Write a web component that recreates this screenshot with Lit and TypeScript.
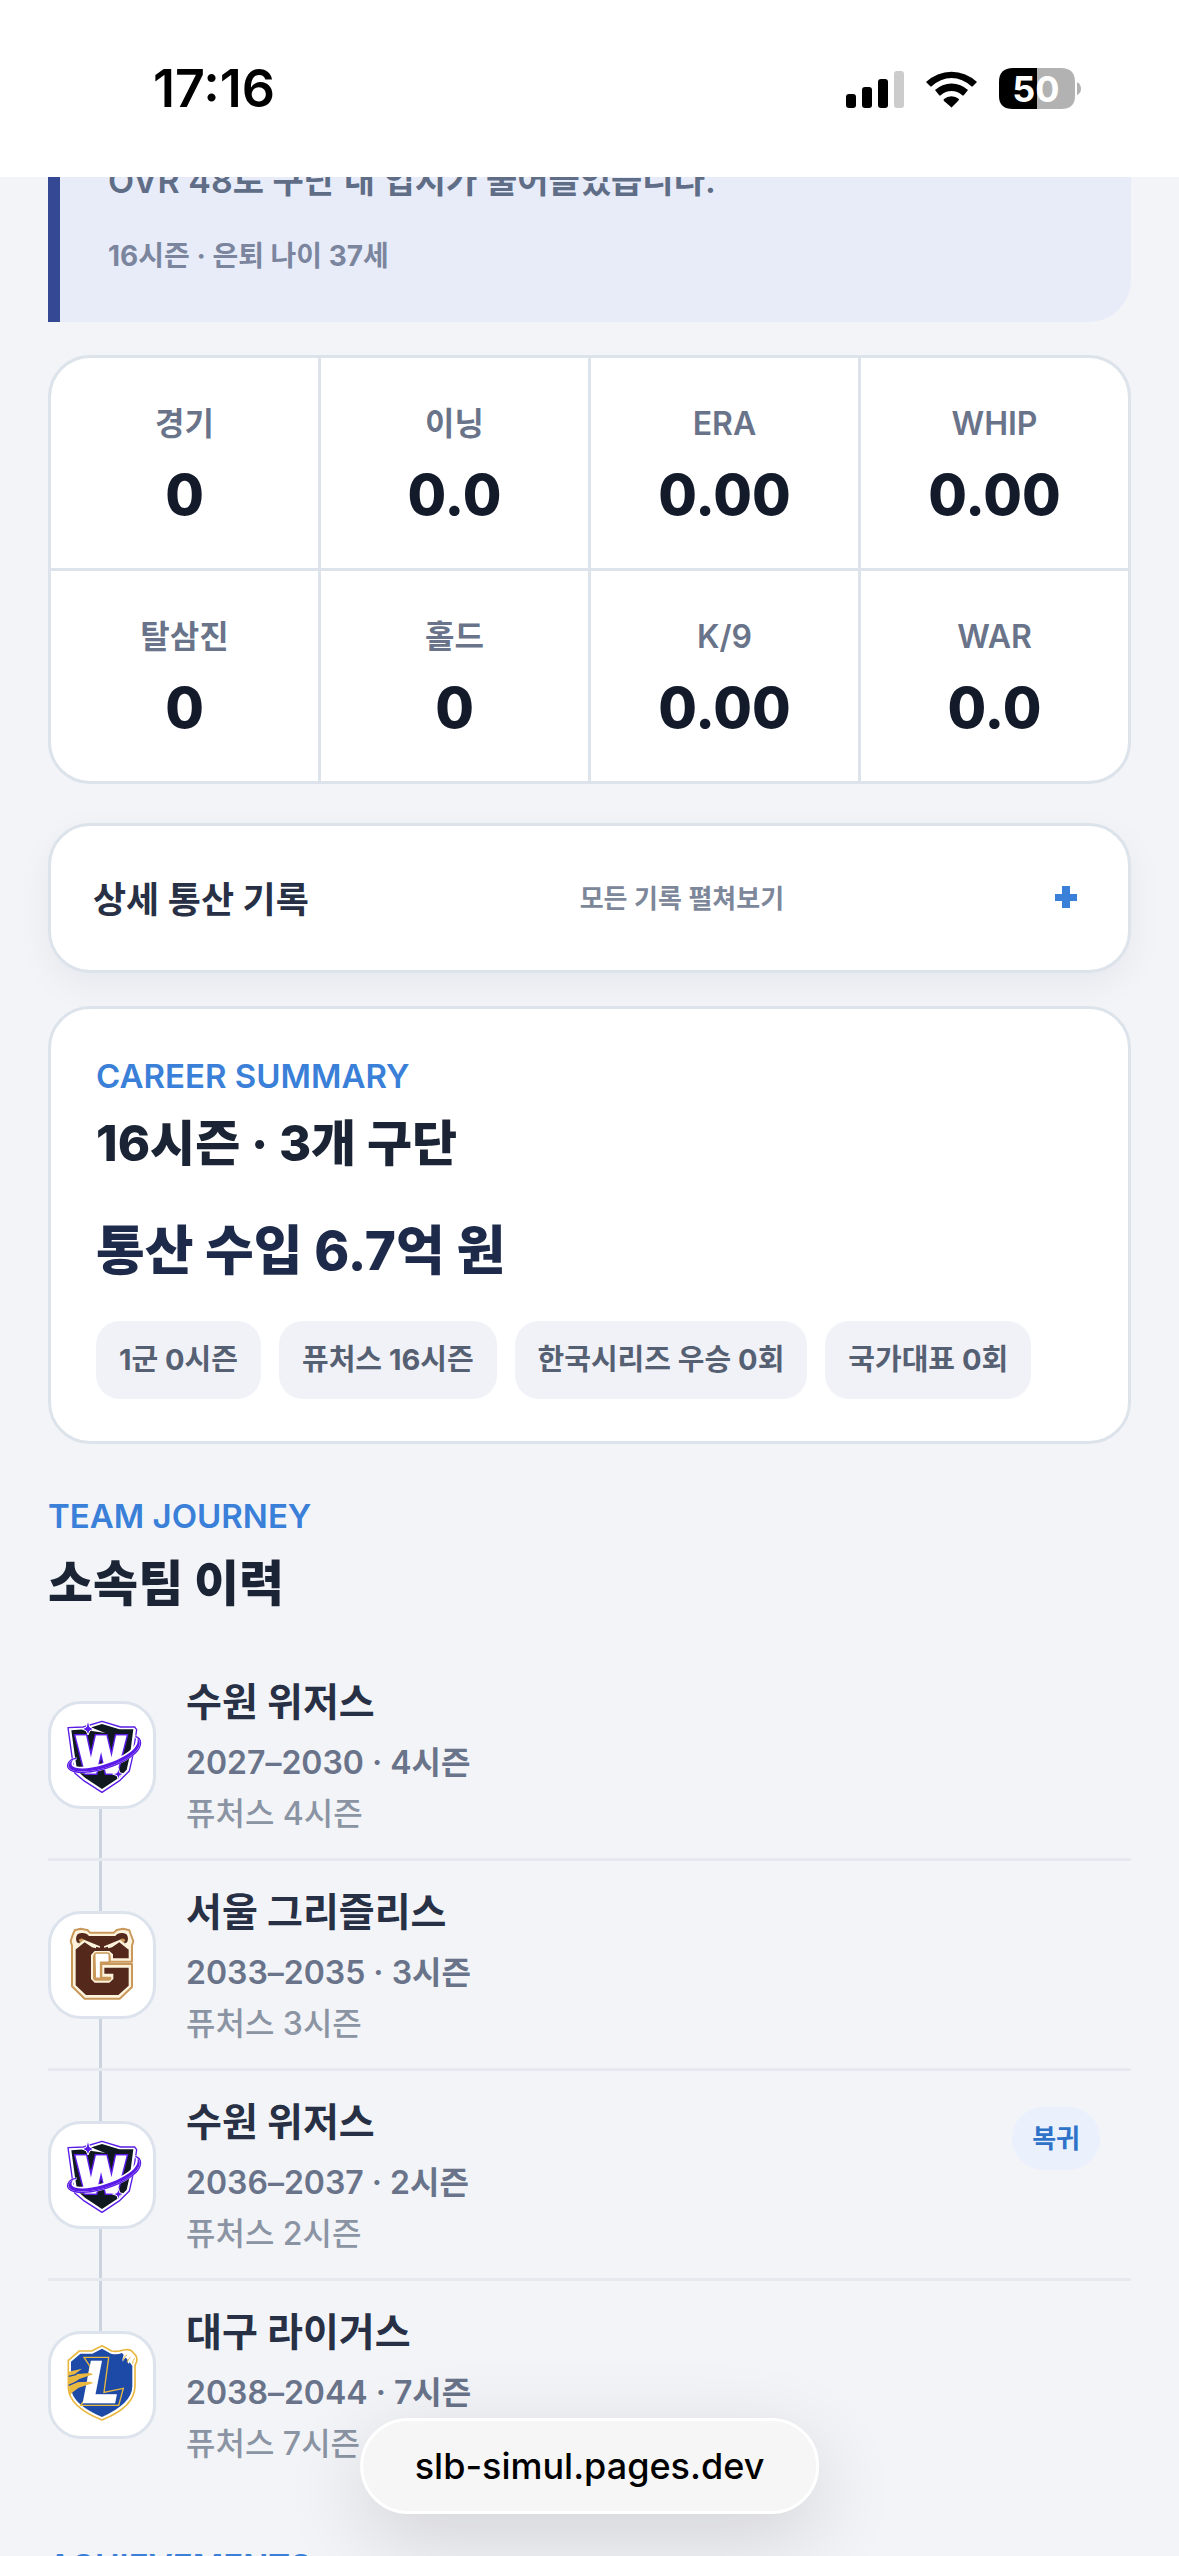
import { LitElement, html, css, svg, nothing } from "lit";
import { customElement, property } from "lit/decorators.js";

type Team = "wizards" | "grizzlies" | "ligers";

interface Stat {
  label: string;
  value: string;
}

interface Stint {
  team: Team;
  name: string;
  years: string;
  level: string;
  badge?: string;
}

const STATS: Stat[] = [
  { label: "경기", value: "0" },
  { label: "이닝", value: "0.0" },
  { label: "ERA", value: "0.00" },
  { label: "WHIP", value: "0.00" },
  { label: "탈삼진", value: "0" },
  { label: "홀드", value: "0" },
  { label: "K/9", value: "0.00" },
  { label: "WAR", value: "0.0" },
];

const CHIPS = ["1군 0시즌", "퓨처스 16시즌", "한국시리즈 우승 0회", "국가대표 0회"];

const STINTS: Stint[] = [
  { team: "wizards", name: "수원 위저스", years: "2027–2030 · 4시즌", level: "퓨처스 4시즌" },
  { team: "grizzlies", name: "서울 그리즐리스", years: "2033–2035 · 3시즌", level: "퓨처스 3시즌" },
  { team: "wizards", name: "수원 위저스", years: "2036–2037 · 2시즌", level: "퓨처스 2시즌", badge: "복귀" },
  { team: "ligers", name: "대구 라이거스", years: "2038–2044 · 7시즌", level: "퓨처스 7시즌" },
];

const wizards = svg`
  <path d="M84 114 L130 112 L186 95 L242 112 L284 112 L290 120 L278 200 L268 244 L240 272 L186 308 L130 272 L104 250 L98 215 Z" fill="#fff" stroke="#5a1be8" stroke-width="4" stroke-linejoin="round"/>
  <path d="M94 122 L135 119 L186 103 L238 119 L280 119 L270 196 L260 240 L236 265 L186 298 L136 265 L112 244 L106 210 Z" fill="#101820"/>
  <path d="M150 112 L196 130 L156 124 Z" fill="#fff"/>
  <text x="183" y="248" text-anchor="middle" class="letter" font-size="150" fill="#fff" stroke="#5a1be8" stroke-width="18">W</text>
  <text x="183" y="248" text-anchor="middle" class="letter" font-size="150" fill="#fff" stroke="#fff" stroke-width="9">W</text>
  <path d="M286 140 C306 146 308 168 286 190 C256 218 190 246 130 248 C96 249 78 238 84 222 C88 212 98 207 110 206 C94 216 92 228 108 232 C150 240 228 216 266 188 C290 170 296 152 286 140 Z" fill="#5a1be8" stroke="#fff" stroke-width="5"/>
  <path d="M286 140 C306 146 308 168 286 190 C256 218 190 246 130 248 C96 249 78 238 84 222 C88 212 98 207 110 206" fill="none" stroke="#5a1be8" stroke-width="4"/>
  <path d="M144 90 L149 112 L161 118 L149 124 L144 136 L139 124 L127 118 L139 112 Z" fill="#5a1be8" stroke="#fff" stroke-width="3"/>
  <path d="M235 236 L239 249 L252 253 L239 258 L235 271 L231 258 L218 253 L231 249 Z" fill="#5a1be8" stroke="#fff" stroke-width="3"/>
`;

const grizzlies = svg`
  <path d="M104 92 L122 87 L142 91 L150 99 L222 99 L230 91 L250 87 L268 92 L273 106 L280 124 L276 138 L276 186 L209 186 L209 172 Q209 165 202 165 L168 165 Q162 165 162 171 L162 234 Q162 240 168 240 L206 240 Q211 240 211 234 L184 234 L184 193 L276 193 L276 262 L239 297 L134 297 L96 260 L96 138 L92 124 L98 106 Z" fill="#fdf3dc" stroke="#c9985a" stroke-width="6" stroke-linejoin="round"/>
  <path d="M108 118 Q108 100 124 100 Q140 99 147 109 L226 109 Q232 99 248 100 Q264 100 264 118 Q262 134 252 128 L266 145 L266 176 L219 176 L219 164 L208 154 L164 154 L153 166 L153 238 L164 249 L208 249 L220 238 L220 222 L193 222 L193 204 L266 204 L266 258 L235 286 L138 286 L107 257 L107 145 L120 128 Q110 134 108 118 Z" fill="#54281a"/>
  <path d="M116 122 Q118 116 128 117 L134 121 L122 130 Z M256 122 Q254 116 244 117 L238 121 L250 130 Z" fill="#c9985a"/>
  <path d="M104 142 L132 120 L180 140 L180 144 L168 141 L168 146 L156 143 L134 128 L106 150 Z M268 142 L240 120 L192 140 L192 144 L204 141 L204 146 L216 143 L238 128 L266 150 Z" fill="#fdf3dc"/>
  <path d="M164 166 Q164 160 170 160 L202 160 Q208 160 208 166 L208 188 L182 188 L182 236 L166 236 Z" fill="#fff" stroke="#c9985a" stroke-width="5"/>
`;

const ligers = svg`
  <path d="M85 122 L118 94 L155 94 L186 78 L215 94 Q234 97 250 91 Q274 86 280 100 Q294 110 290 126 Q286 132 285 140 L285 200 Q284 262 186 301 Q88 262 85 205 Z" fill="#fff" stroke="#e9b840" stroke-width="5" stroke-linejoin="round"/>
  <path d="M93 126 L121 102 L157 102 L186 87 L213 102 Q230 106 246 100 L256 112 L277 138 L277 200 Q276 252 186 292 Q96 254 93 205 Z" fill="#1d4aa6"/>
  <path d="M248 126 Q246 108 258 98 L276 100 L286 112 L284 132 L276 134 Q276 122 270 114 Q272 128 264 132 Q262 120 266 108 Q254 112 248 126 Z" fill="#fff"/>
  <path d="M249 122 Q252 108 261 106 M262 128 Q264 116 272 112 M278 132 Q278 122 284 116" fill="none" stroke="#e9b840" stroke-width="3"/>
  <path d="M132 113 L206 113 L192 218 L250 206 L236 257 L122 257 L136 238 L150 140 Z" fill="#1d4aa6" stroke="#e9b840" stroke-width="4"/>
  <text x="183" y="247" text-anchor="middle" class="letter" font-style="italic" font-size="174" fill="#fff" stroke="#fff" stroke-width="8">L</text>
  <path d="M86 156 L126 147 L104 164 L150 160 L160 164 L118 178 L104 188 L150 186 L160 190 L116 204 L98 218 L88 228 Z" fill="#e9b840"/>
  <path d="M86 170 L110 164 M86 197 L112 186" stroke="#1d4aa6" stroke-width="4"/>
`;

const LOGOS = { wizards, grizzlies, ligers };

@customElement("status-bar")
class StatusBar extends LitElement {
  static styles = css`
    :host {
      display: flex;
      justify-content: space-between;
      align-items: center;
      height: 177px;
      padding: 0 96px 0 153px;
      box-sizing: border-box;
      background: #fff;
      color: #000;
      flex: none;
    }
    .time {
      font-size: 52px;
      font-weight: 600;
      line-height: 60px;
    }
    .icons {
      display: flex;
      align-items: center;
      gap: 22px;
    }
    .icons svg {
      display: block;
    }
    .percent {
      font: 700 36px Inter, sans-serif;
    }
  `;

  render() {
    return html`
      <span class="time">17:16</span>
      <div class="icons">
        <svg width="58" height="42" viewBox="0 0 58 42" aria-hidden="true">
          <rect x="0" y="26" width="10" height="14" rx="3" />
          <rect x="16" y="19" width="10" height="21" rx="3" />
          <rect x="32" y="11" width="10" height="29" rx="3" />
          <rect x="48" y="3" width="10" height="37" rx="3" fill="#ccc" />
        </svg>
        <svg width="51" height="42" viewBox="0 0 51 42" aria-hidden="true">
          <path d="M0 14 A37 37 0 0 1 51 14 L47 18 Q46 19 45 18 A28 28 0 0 0 6 18 Q5 19 4 18 Z" />
          <path d="M9 22 A24 24 0 0 1 42 22 L38 27 Q37 28 36 27 A16 16 0 0 0 15 27 Q14 28 13 27 Z" />
          <path d="M18 31 A12 12 0 0 1 33 31 Q33 32 32 33 L26 39 Q25 40 25 39 L18 33 Q17 32 18 31 Z" />
        </svg>
        <svg width="84" height="42" viewBox="0 0 84 42" role="img" aria-label="50%">
          <path d="M38 0 H62 Q76 0 76 14 V28 Q76 41 62 41 H38 Z" fill="#b2b2b2" />
          <path d="M38 0 H14 Q0 0 0 14 V28 Q0 41 14 41 H38 Z" />
          <path d="M78 14 Q82 16 82 21 Q82 25 78 27 Z" fill="#b2b2b2" />
          <text class="percent" x="37" y="34" text-anchor="middle" fill="#fff">50</text>
        </svg>
      </div>
    `;
  }
}

@customElement("stint-row")
class StintRow extends LitElement {
  @property({ attribute: false }) stint!: Stint;
  @property({ type: Boolean }) first = false;
  @property({ type: Boolean }) last = false;

  static styles = css`
    .row {
      display: flex;
      align-items: flex-start;
      gap: 30px;
      height: 207px;
    }
    .track {
      display: flex;
      flex-direction: column;
      align-items: center;
      align-self: stretch;
      flex: none;
    }
    .line {
      flex: 1;
      width: 3px;
      margin-right: 3px;
      background: #cbd3df;
    }
    .hidden {
      background: none;
    }
    .crest {
      display: block;
      border: 3px solid #dde3ec;
      border-radius: 33px;
      background: #fff;
    }
    .letter {
      font-family: "Liberation Sans", sans-serif;
      font-weight: 700;
      paint-order: stroke;
    }
    .info {
      flex: 1;
      padding-top: 24px;
    }
    h3,
    p {
      margin: 0;
    }
    h3 {
      font-size: 39px;
      font-weight: 700;
      line-height: 54px;
      color: #273044;
    }
    .years {
      margin-top: 8px;
      font-size: 32px;
      font-weight: 600;
      line-height: 51px;
      color: #697389;
    }
    .level {
      font-size: 32px;
      font-weight: 500;
      line-height: 51px;
      color: #8b94a3;
    }
    .badge {
      margin: 36px 31px 0 0;
      padding: 0 20px;
      border-radius: 32px;
      background: #eaf1fd;
      color: #2f73c9;
      font-size: 26px;
      font-weight: 700;
      line-height: 63px;
    }
  `;

  render() {
    const s = this.stint;
    return html`
      <div class="row">
        <div class="track">
          <span class="line ${this.first ? "hidden" : ""}"></span>
          <svg class="crest" width="102" height="102" viewBox="33 43 306 306" role="img" aria-label=${s.name}>
            ${LOGOS[s.team]}
          </svg>
          <span class="line ${this.last ? "hidden" : ""}"></span>
        </div>
        <div class="info">
          <h3>${s.name}</h3>
          <p class="years">${s.years}</p>
          <p class="level">${s.level}</p>
        </div>
        ${s.badge ? html`<span class="badge">${s.badge}</span>` : nothing}
      </div>
    `;
  }
}

@customElement("app-root")
class AppRoot extends LitElement {
  static styles = css`
    :host {
      display: flex;
      flex-direction: column;
      height: 100vh;
      overflow: hidden;
      background: #f3f4f8;
      font-family: Inter, "Noto Sans CJK KR", sans-serif;
    }
    main {
      flex: 1;
      min-height: 0;
      overflow: hidden;
      padding: 0 48px;
    }
    h2,
    p,
    dl,
    dd,
    ul {
      margin: 0;
      padding: 0;
    }
    ul {
      list-style: none;
    }
    .notice {
      margin-top: -60px;
      padding: 37px 48px 39px;
      border-left: 12px solid #354893;
      border-radius: 0 42px 42px 0;
      background: #e8ecf9;
      color: #5f6d87;
      font-size: 34px;
      font-weight: 600;
      line-height: 54px;
    }
    .notice small {
      display: block;
      margin-top: 21px;
      font-size: 28px;
      font-weight: 700;
      color: #7b869e;
    }
    .card {
      border: 3px solid #dde3ea;
      border-radius: 42px;
      background: #fff;
    }
    .stats {
      display: grid;
      grid-template-columns: repeat(4, 1fr);
      gap: 3px;
      margin-top: 33px;
      overflow: hidden;
      background: #dde3ea;
    }
    .stat {
      height: 210px;
      box-sizing: border-box;
      padding-top: 42px;
      background: #fff;
      text-align: center;
    }
    dt {
      font-size: 32px;
      font-weight: 600;
      line-height: 48px;
      color: #697389;
    }
    dd {
      margin-top: 12px;
      font-size: 56px;
      font-weight: 800;
      line-height: 70px;
      color: #131a2a;
    }
    .details {
      display: flex;
      justify-content: space-between;
      align-items: center;
      width: 100%;
      height: 150px;
      margin-top: 39px;
      padding: 0 51px 3px 42px;
      font-family: inherit;
      text-align: left;
      box-shadow: 0 12px 36px rgba(20, 26, 42, 0.05);
    }
    .details strong {
      font-size: 36px;
      font-weight: 700;
      color: #273044;
    }
    .details span {
      font-size: 26px;
      font-weight: 600;
      color: #7d879a;
    }
    .details svg {
      display: block;
      fill: #3a7fd8;
    }
    .summary {
      position: relative;
      margin-top: 33px;
      padding: 43px 45px 42px;
    }
    .eyebrow {
      font-size: 33px;
      font-weight: 600;
      line-height: 48px;
      color: #3a7fd8;
    }
    h2 {
      margin-top: 6px;
      font-size: 49px;
      font-weight: 800;
      line-height: 76px;
      color: #1a2435;
    }
    .income {
      margin-top: 25px;
      font-size: 53px;
      font-weight: 800;
      line-height: 88px;
      color: #1d2a4a;
    }
    .chips {
      display: flex;
      flex-wrap: wrap;
      gap: 18px;
      margin-top: 26px;
    }
    .chips li {
      padding: 0 23px;
      border-radius: 24px;
      background: #f1f2f7;
      color: #566073;
      font-size: 29px;
      font-weight: 700;
      line-height: 78px;
    }
    .heading {
      margin-top: 48px;
    }
    .stints {
      margin-top: 29px;
    }
    .stints li + li {
      border-top: 3px solid #e7e9f1;
    }
    .next {
      margin-top: 54px;
    }
    .address {
      position: absolute;
      left: 50%;
      bottom: 42px;
      transform: translateX(-50%);
      padding: 0 52px;
      border: 3px solid #fff;
      border-radius: 48px;
      background: #f6f6f7;
      box-shadow: 0 24px 84px rgba(0, 0, 0, 0.14);
      color: #000;
      font-size: 36px;
      font-weight: 500;
      line-height: 90px;
      text-decoration: none;
      white-space: nowrap;
    }
  `;

  render() {
    return html`
      <status-bar></status-bar>
      <main>
        <section class="notice">
          <p>OVR 48로 구단 내 입지가 줄어들었습니다.</p>
          <small>16시즌 · 은퇴 나이 37세</small>
        </section>

        <dl class="stats card">
          ${STATS.map(
            (s) => html`<div class="stat">
              <dt>${s.label}</dt>
              <dd>${s.value}</dd>
            </div>`
          )}
        </dl>

        <button class="details card" type="button" aria-expanded="false">
          <strong>상세 통산 기록</strong>
          <span>모든 기록 펼쳐보기</span>
          <svg width="22" height="22" viewBox="0 0 22 22" aria-hidden="true">
            <path d="M7 0 H15 V8 H22 V15 H15 V22 H7 V15 H0 V8 H7 Z" />
          </svg>
        </button>

        <section class="summary card">
          <p class="eyebrow">CAREER SUMMARY</p>
          <h2>16시즌 · 3개 구단</h2>
          <p class="income">통산 수입 6.7억 원</p>
          <ul class="chips">
            ${CHIPS.map((c) => html`<li>${c}</li>`)}
          </ul>
        </section>

        <section>
          <div class="heading">
            <p class="eyebrow">TEAM JOURNEY</p>
            <h2>소속팀 이력</h2>
          </div>
          <ul class="stints">
            ${STINTS.map(
              (s, i) => html`<li>
                <stint-row .stint=${s} ?first=${i === 0} ?last=${i === STINTS.length - 1}></stint-row>
              </li>`
            )}
          </ul>
        </section>

        <section class="next">
          <p class="eyebrow">ACHIEVEMENTS</p>
        </section>
      </main>
      <a class="address" href="https://slb-simul.pages.dev">slb-simul.pages.dev</a>
    `;
  }
}
